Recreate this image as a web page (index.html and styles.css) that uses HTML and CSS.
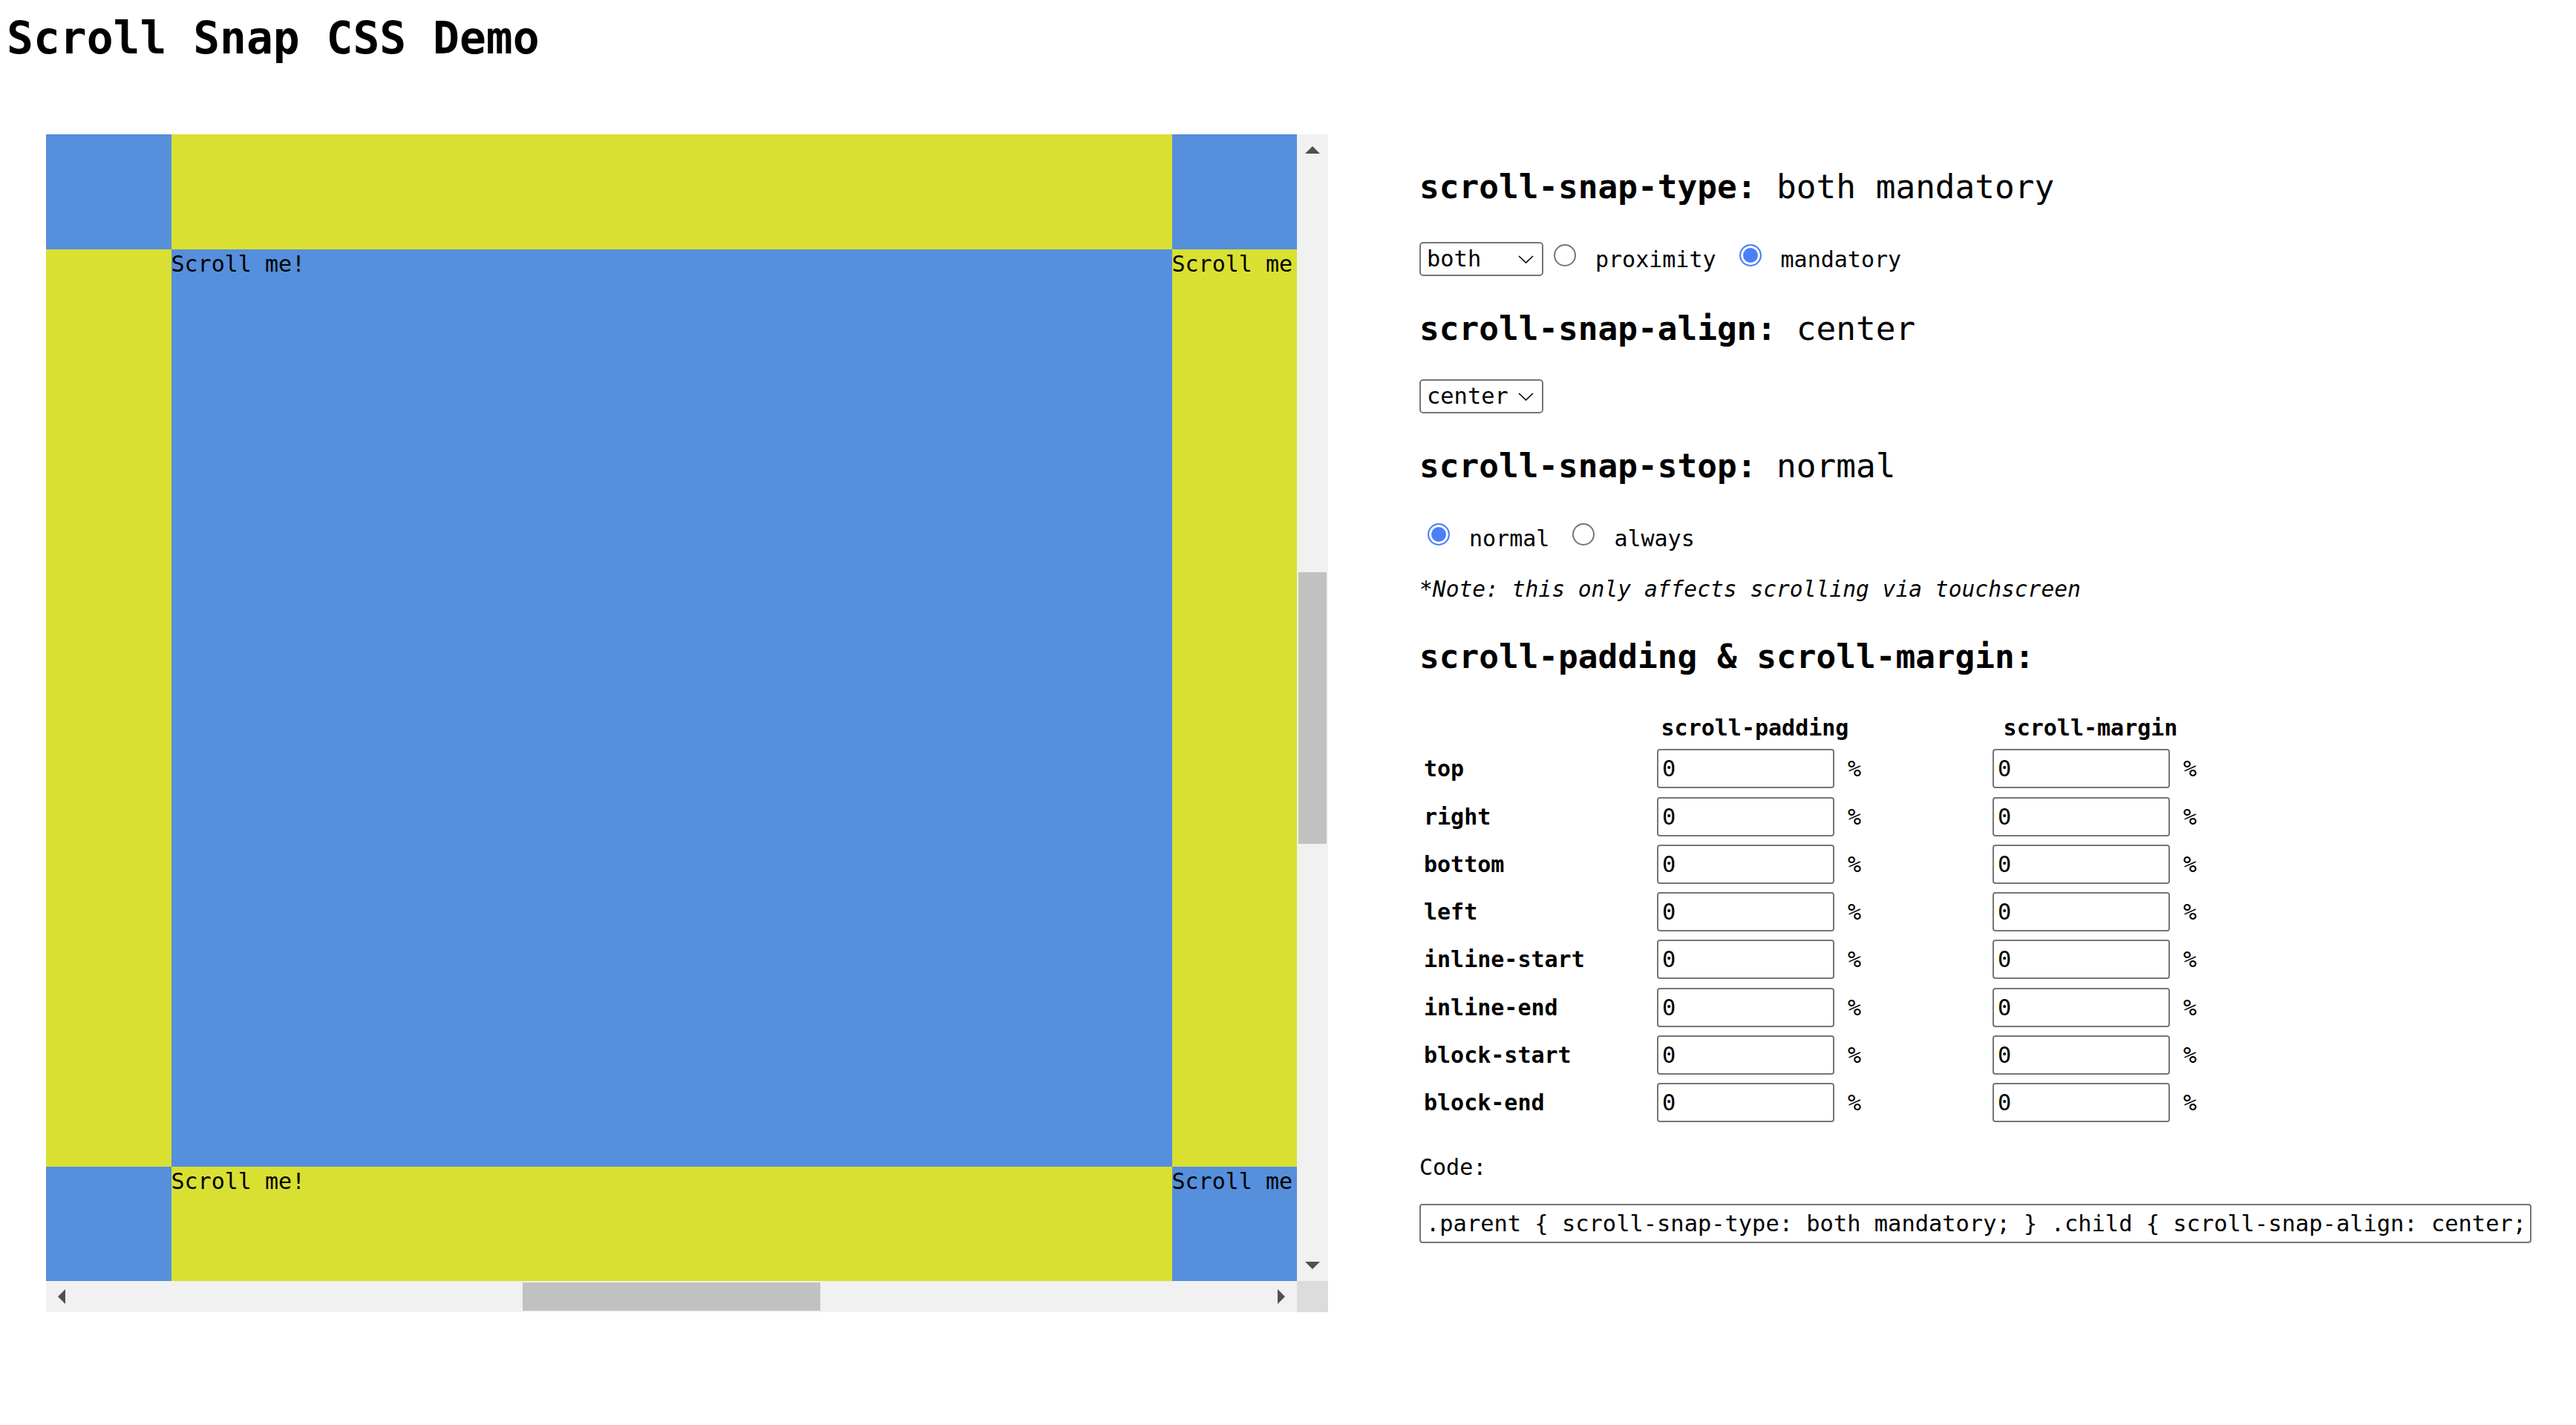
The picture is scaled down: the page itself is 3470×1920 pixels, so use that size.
FILE: index.html
```html
<!DOCTYPE html>
<html lang="en">
<head>
<meta charset="utf-8">
<title>Scroll Snap CSS Demo</title>
<link rel="stylesheet" href="styles.css">
</head>
<body>
<h1 class="title">Scroll Snap CSS Demo</h1>
<main class="layout">
  <section class="scroller">
    <div class="scroller-body">
      <div class="viewport">
        <div class="tile blue"></div>
        <div class="tile yellow"></div>
        <div class="tile blue"></div>
        <div class="tile yellow"></div>
        <div class="tile blue"><span>Scroll me!</span></div>
        <div class="tile yellow"><span>Scroll me!</span></div>
        <div class="tile blue"></div>
        <div class="tile yellow"><span>Scroll me!</span></div>
        <div class="tile blue"><span>Scroll me!</span></div>
      </div>
      <div class="vbar">
        <div class="sb-btn"><svg width="20" height="10" viewBox="0 0 20 10"><polygon points="0,10 10,0 20,10" fill="#505050"/></svg></div>
        <div class="vtrack"><div class="vthumb"></div></div>
        <div class="sb-btn"><svg width="20" height="10" viewBox="0 0 20 10"><polygon points="0,0 20,0 10,10" fill="#505050"/></svg></div>
      </div>
    </div>
    <div class="hbar-row">
      <div class="hbar">
        <div class="sb-btn"><svg width="10" height="20" viewBox="0 0 10 20"><polygon points="10,0 10,20 0,10" fill="#505050"/></svg></div>
        <div class="htrack"><div class="hthumb"></div></div>
        <div class="sb-btn"><svg width="10" height="20" viewBox="0 0 10 20"><polygon points="0,0 10,10 0,20" fill="#505050"/></svg></div>
      </div>
      <div class="corner"></div>
    </div>
  </section>

  <section class="controls">
    <h2 class="prop">scroll-snap-type: <span class="prop-value">both mandatory</span></h2>
    <div class="option-row row-type">
      <div class="select"><span>both</span><svg width="21" height="11" viewBox="0 0 21 11"><polyline points="1,1 10.5,10 20,1" fill="none" stroke="#000" stroke-width="1.6"/></svg></div>
      <label class="choice"><input class="radio" type="radio" name="strict"><span>proximity</span></label>
      <label class="choice"><input class="radio" type="radio" name="strict" checked><span>mandatory</span></label>
    </div>

    <h2 class="prop">scroll-snap-align: <span class="prop-value">center</span></h2>
    <div class="option-row row-align">
      <div class="select"><span>center</span><svg width="21" height="11" viewBox="0 0 21 11"><polyline points="1,1 10.5,10 20,1" fill="none" stroke="#000" stroke-width="1.6"/></svg></div>
    </div>

    <h2 class="prop">scroll-snap-stop: <span class="prop-value">normal</span></h2>
    <div class="option-row row-stop">
      <label class="choice"><input class="radio" type="radio" name="stop" checked><span>normal</span></label>
      <label class="choice"><input class="radio" type="radio" name="stop"><span>always</span></label>
    </div>
    <p class="note">*Note: this only affects scrolling via touchscreen</p>

    <h2 class="prop prop-offsets">scroll-padding &amp; scroll-margin:</h2>
    <div class="offsets">
      <div></div>
      <div class="offsets-head">scroll-padding</div>
      <div class="offsets-head">scroll-margin</div>

      <div class="offset-name">top</div>
      <div class="offset-cell"><input class="num" type="text" value="0"><span>%</span></div>
      <div class="offset-cell"><input class="num" type="text" value="0"><span>%</span></div>

      <div class="offset-name">right</div>
      <div class="offset-cell"><input class="num" type="text" value="0"><span>%</span></div>
      <div class="offset-cell"><input class="num" type="text" value="0"><span>%</span></div>

      <div class="offset-name">bottom</div>
      <div class="offset-cell"><input class="num" type="text" value="0"><span>%</span></div>
      <div class="offset-cell"><input class="num" type="text" value="0"><span>%</span></div>

      <div class="offset-name">left</div>
      <div class="offset-cell"><input class="num" type="text" value="0"><span>%</span></div>
      <div class="offset-cell"><input class="num" type="text" value="0"><span>%</span></div>

      <div class="offset-name">inline-start</div>
      <div class="offset-cell"><input class="num" type="text" value="0"><span>%</span></div>
      <div class="offset-cell"><input class="num" type="text" value="0"><span>%</span></div>

      <div class="offset-name">inline-end</div>
      <div class="offset-cell"><input class="num" type="text" value="0"><span>%</span></div>
      <div class="offset-cell"><input class="num" type="text" value="0"><span>%</span></div>

      <div class="offset-name">block-start</div>
      <div class="offset-cell"><input class="num" type="text" value="0"><span>%</span></div>
      <div class="offset-cell"><input class="num" type="text" value="0"><span>%</span></div>

      <div class="offset-name">block-end</div>
      <div class="offset-cell"><input class="num" type="text" value="0"><span>%</span></div>
      <div class="offset-cell"><input class="num" type="text" value="0"><span>%</span></div>
    </div>

    <div class="code-label">Code:</div>
    <input class="code" type="text" readonly value=".parent { scroll-snap-type: both mandatory; } .child { scroll-snap-align: center; }">
  </section>
</main>
</body>
</html>
```
FILE: styles.css
```css
body {
  margin: 0;
  font-family: "DejaVu Sans Mono", "Liberation Mono", monospace;
  font-size: 30px;
  color: #000;
  background: #fff;
}

.title {
  margin: 0;
  padding: 17px 0 0 9px;
  font-size: 59.6px;
  line-height: 70px;
  font-weight: bold;
}

.layout {
  display: flex;
  align-items: flex-start;
  margin-top: 94px;
  padding-left: 62px;
}

/* scroll demo */
.scroller {
  flex: none;
  width: 1727px;
  display: flex;
  flex-direction: column;
}

.scroller-body {
  display: flex;
  height: 1545px;
}

.viewport {
  width: 1685px;
  height: 1545px;
  overflow: hidden;
  display: grid;
  grid-template-columns: 168.5px 1348px 168.5px;
  grid-template-rows: 154.5px 1236px 154.5px;
}

.tile {
  padding-top: 2px;
  line-height: 35px;
  white-space: nowrap;
  min-width: 0;
}

.blue { background: #568fdb; }
.yellow { background: #d9e032; }

.vbar {
  flex: none;
  width: 42px;
  display: flex;
  flex-direction: column;
  background: #f1f1f1;
}

.sb-btn {
  flex: none;
  width: 42px;
  height: 42px;
  display: flex;
  align-items: center;
  justify-content: center;
}

.vtrack {
  flex: 1;
  display: flex;
  flex-direction: column;
  justify-content: center;
  padding: 0 2px;
}

.vthumb {
  height: 366px;
  background: #c1c1c1;
}

.hbar-row {
  display: flex;
  height: 42px;
}

.hbar {
  flex: 1;
  display: flex;
  background: #f1f1f1;
}

.htrack {
  flex: 1;
  display: flex;
  justify-content: center;
  padding: 2px 0;
}

.hthumb {
  width: 401px;
  background: #c1c1c1;
}

.corner {
  width: 42px;
  background: #dcdcdc;
}

/* controls */
.controls {
  margin-left: 123px;
  display: flex;
  flex-direction: column;
  align-items: flex-start;
}

.prop {
  margin: 45px 0 0;
  font-size: 44.4px;
  line-height: 52px;
  font-weight: bold;
  white-space: nowrap;
}

.prop-offsets { margin-top: 47px; }

.prop-value { font-weight: normal; }

.option-row {
  display: flex;
  align-items: stretch;
  height: 46px;
}

.row-type { margin-top: 48px; }
.row-align { margin-top: 42px; }
.row-stop { margin-top: 48px; }

.select {
  box-sizing: border-box;
  width: 167px;
  height: 46px;
  border: 2px solid #767676;
  border-radius: 5px;
  display: flex;
  align-items: center;
  justify-content: space-between;
  padding: 0 11px 0 8px;
  font-size: 30.4px;
  line-height: 36px;
}

.choice {
  display: flex;
  align-items: center;
  margin-left: 31px;
  line-height: 35px;
}

.select + .choice { margin-left: 14px; }
.row-stop .choice:first-child { margin-left: 11px; }

.radio {
  -webkit-appearance: none;
  appearance: none;
  box-sizing: border-box;
  align-self: flex-start;
  width: 30px;
  height: 30px;
  margin: 3px 26px 0 0;
  border: 2px solid #767676;
  border-radius: 50%;
  background: #fff;
}

.radio:checked {
  border: 2.5px solid #4a80f5;
  background: #4a80f5;
  box-shadow: inset 0 0 0 3px #fff;
}

.note {
  margin: 29px 0 0;
  font-size: 29.6px;
  font-style: italic;
  line-height: 35px;
}

.offsets {
  margin-top: 52px;
  display: grid;
  grid-template-columns: 320px 452px auto;
  row-gap: 11.3px;
  align-items: center;
}

.offsets-head {
  width: 264px;
  text-align: center;
  font-weight: bold;
  line-height: 35px;
}

.offset-name {
  padding-left: 6px;
  font-weight: bold;
  line-height: 35px;
}

.offset-cell {
  display: flex;
  align-items: center;
  gap: 18px;
}

.num,
.code {
  box-sizing: border-box;
  height: 53px;
  margin: 0;
  border: 2px solid #767676;
  border-radius: 4px;
  background: #fff;
  color: #000;
  font-family: "DejaVu Sans Mono", "Liberation Mono", monospace;
  font-size: 30.4px;
  outline: none;
}

.num {
  width: 239px;
  padding: 0 0 0 5px;
}

.code-label {
  margin-top: 43px;
  line-height: 35px;
}

.code {
  margin-top: 32px;
  width: 1498px;
  padding: 0 0 0 7px;
}
```
